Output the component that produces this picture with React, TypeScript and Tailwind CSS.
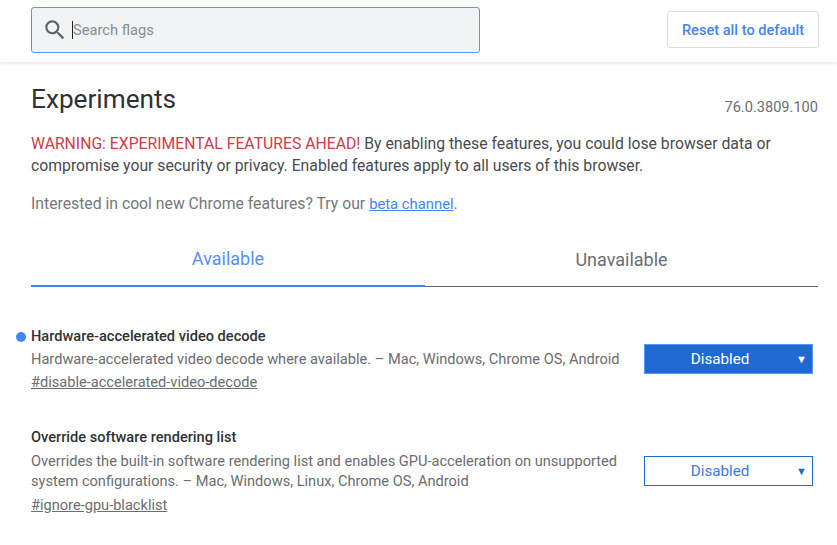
const Experiment = ({
  title,
  description,
  link,
  active,
  spacing = 'space-y-[3px]',
}: {
  title: string;
  description: string;
  link: string;
  active?: boolean;
  spacing?: string;
}) => (
  <div className={`relative w-[596px] ${spacing}`}>
    {active && <span className="absolute left-[-15px] top-[6px] h-[10px] w-[10px] rounded-full bg-[#4285f4]" />}
    <h2 className="text-[14.6px] leading-[20px] font-medium text-[#303134]">{title}</h2>
    <p className="text-[14.6px] leading-[20px] text-[#6b6d70]">{description}</p>
    <a className="block text-[14.6px] leading-[20px] text-[#6b6d70] underline">{link}</a>
  </div>
);

const App = () => {
  return (
    <div className="h-[545px] w-[837px] overflow-hidden bg-white font-['Roboto',sans-serif]">
      {/* Search header */}
      <header className="flex h-[62px] items-start justify-between pl-[31px] pr-[18px] pt-[7px] shadow-[0_2px_2px_rgba(0,0,0,0.08)]">
        <div className="flex h-[46px] w-[449px] items-center rounded-[3px] border border-[#5a95f5] bg-[#f1f3f4] pl-[10px]">
          <svg width="26" height="26" viewBox="0 0 24 24" fill="#5f6368">
            <path d="M15.5 14h-.79l-.28-.27A6.471 6.471 0 0 0 16 9.5 6.5 6.5 0 1 0 9.5 16c1.61 0 3.09-.59 4.23-1.57l.27.28v.79l5 4.99L20.49 19l-4.99-5zm-6 0C7.01 14 5 11.99 5 9.5S7.01 5 9.5 5 14 7.01 14 9.5 11.99 14 9.5 14z" />
          </svg>
          <span className="ml-[4px] h-[18px] w-px bg-[#202124]" />
          <span className="text-[14.7px] text-[#8a8c8f]">Search flags</span>
        </div>
        <button className="mt-[4px] h-[37px] w-[152px] rounded-[3px] border border-[#dadce0] pt-[2px] text-[14.6px] font-medium text-[#4285f4]">
          Reset all to default
        </button>
      </header>

      <main className="pl-[31px] pr-[19px]">
        <div className="flex items-start justify-between pt-[21px]">
          <h1 className="text-[26.2px] leading-[32px] text-[#303134]">Experiments</h1>
          <span className="mt-[14px] text-[14.6px] leading-[20px] text-[#6b6d70]">76.0.3809.100</span>
        </div>
        <p className="mt-[16px] text-[15.75px] leading-[22px] text-[#484b50]">
          <span className="text-[#cf3a4b]">WARNING: EXPERIMENTAL FEATURES AHEAD!</span> By enabling these features, you could lose browser data or compromise your security or privacy. Enabled features apply to all users of this browser.
        </p>
        <p className="mt-[16px] text-[15.75px] leading-[22px] text-[#75777a]">
          Interested in cool new Chrome features? Try our{' '}
          <a className="text-[14.8px] text-[#4285f4] underline">beta channel</a>.
        </p>

        {/* Tabs */}
        <div className="mt-[17px] flex">
          <div className="h-[55px] w-[394px] border-b-2 border-[#4285f4] pt-[15px] text-center text-[18px] leading-[24px] text-[#5a8ef5]">Available</div>
          <div className="h-[55px] flex-1 border-b border-[#5f6368] pt-[16px] text-center text-[18px] leading-[24px] text-[#6b6d70]">Unavailable</div>
        </div>

        {/* Experiments */}
        <div className="mt-[39px] flex items-center justify-between">
          <Experiment
            active
            title="Hardware-accelerated video decode"
            description="Hardware-accelerated video decode where available. – Mac, Windows, Chrome OS, Android"
            link="#disable-accelerated-video-decode"
          />
          <div className="mr-[5px] flex h-[30px] w-[169px] items-center border border-[#5a95f5] bg-[#1f69d1] text-[15.2px] text-white">
            <span className="flex-1 pr-[1px] pt-[1px] text-center">Disabled</span>
            <span className="pr-[5px] text-[11px] leading-none">▼</span>
          </div>
        </div>
        <div className="mt-[35px] flex items-center justify-between">
          <Experiment
            spacing="space-y-[4px]"
            title="Override software rendering list"
            description="Overrides the built-in software rendering list and enables GPU-acceleration on unsupported system configurations. – Mac, Windows, Linux, Chrome OS, Android"
            link="#ignore-gpu-blacklist"
          />
          <div className="mr-[5px] flex h-[30px] w-[169px] items-center border border-[#1f69d1] bg-white text-[15.2px] text-[#3b78d8]">
            <span className="flex-1 pr-[1px] text-center">Disabled</span>
            <span className="pr-[5px] text-[11px] leading-none text-[#1f69d1]">▼</span>
          </div>
        </div>
      </main>
    </div>
  );
};

export default App;
